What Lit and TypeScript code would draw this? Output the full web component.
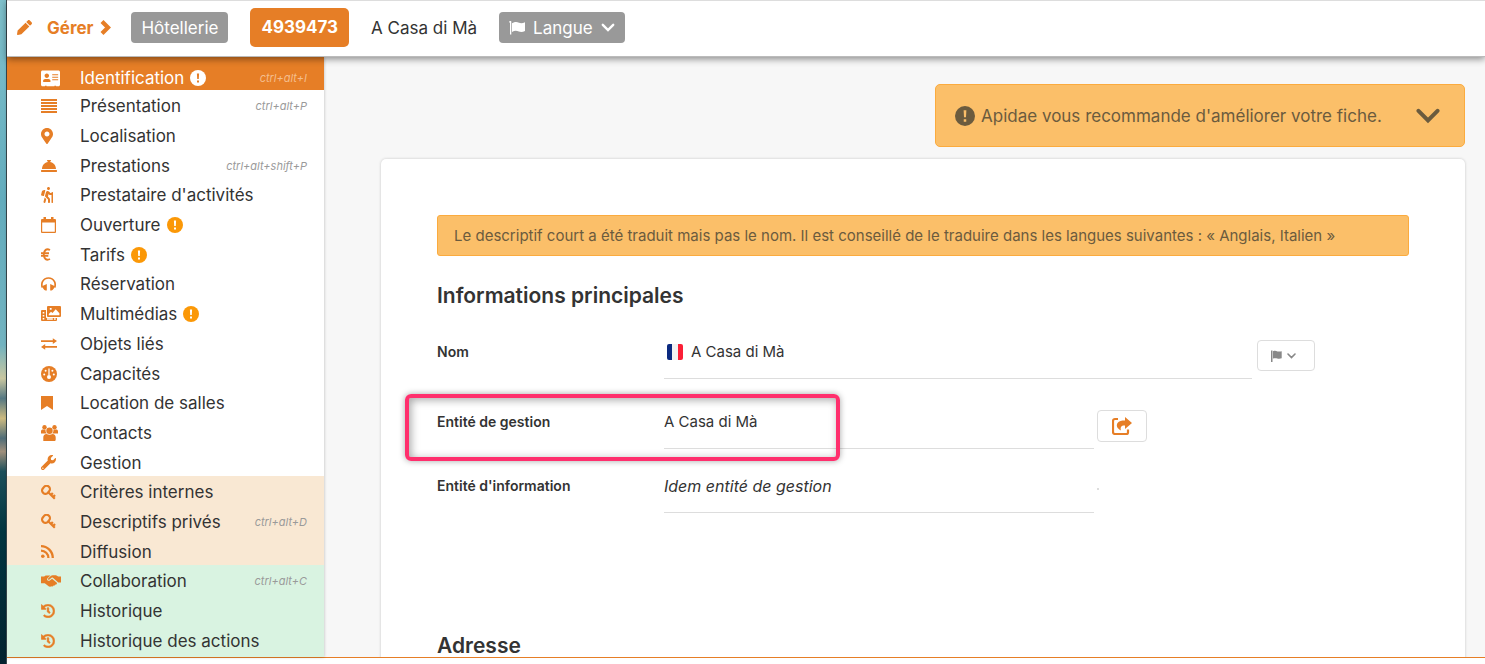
import { LitElement, html, svg, css, nothing, TemplateResult } from "lit";
import { customElement, property } from "lit/decorators.js";
import { classMap } from "lit/directives/class-map.js";

interface Glyph {
  box: string;
  w: number;
  h: number;
  body: TemplateResult;
}

const glyphs: Record<string, Glyph> = {
  pencil: { box: "0 0 512 512", w: 15, h: 15, body: svg`<path fill="currentColor" d="M497.9 142.1l-46.1 46.1c-4.7 4.7-12.3 4.7-17 0l-111-111c-4.7-4.7-4.7-12.3 0-17l46.1-46.1c18.7-18.7 49.1-18.7 67.9 0l60.1 60.1c18.8 18.7 18.8 49.1 0 67.9zM284.2 99.8L21.6 362.4.4 483.9c-2.9 16.4 11.4 30.6 27.8 27.8l121.5-21.3 262.6-262.6c4.7-4.7 4.7-12.3 0-17l-111-111c-4.8-4.7-12.4-4.7-17.1 0z"/>` },
  right: { box: "0 0 11 15", w: 11, h: 15, body: svg`<path d="M2 1.600L8 7.500L2 13.400" fill="none" stroke="currentColor" stroke-width="4.200"/>` },
  down: { box: "0 0 14 9", w: 14, h: 9, body: svg`<path d="M1.800 1.800L7 7L12.200 1.800" fill="none" stroke="currentColor" stroke-width="2.400" stroke-linecap="round"/>` },
  bigDown: { box: "0 0 24 16", w: 24, h: 16, body: svg`<path d="M2.500 2.800L12 12.500L21.500 2.800" fill="none" stroke="currentColor" stroke-width="4" stroke-linecap="round"/>` },
  smallDown: { box: "0 0 9 6", w: 9, h: 6, body: svg`<path d="M1 1L4.500 4.500L8 1" fill="none" stroke="currentColor" stroke-width="1.600" stroke-linecap="round"/>` },
  flag: { box: "0 0 16 14", w: 16, h: 14, body: svg`<path fill="currentColor" d="M.3.8a1 1 0 0 1 2 0v12.600H1V2C.5 1.800.3 1.400.3.800zM3 2.300C6 .6 8 .8 10 1.800c2 .8 4 .3 6-.5v8.700c-2 .9-4 1.400-6.200.5C7.500 9.500 5.500 9.500 3 11z"/>` },
  smallFlag: { box: "0 0 11 12", w: 11, h: 12, body: svg`<path fill="currentColor" d="M0 .5h1.500V12H0zM2 1.200c2-.6 3-.3 4.500.2 1.500.4 2.800.2 4.200-.2v7c-1.500.5-3 .7-4.500.2-1.600-.4-2.700-.3-4.200.2z"/>` },
  card: { box: "0 0 576 512", w: 19, h: 17, body: svg`<path fill="currentColor" fill-rule="evenodd" d="M528 16H48C21.500 16 0 37.500 0 64v380c0 26.500 21.500 48 48 48h72v-14h50v14h236v-14h50v14h72c26.500 0 48-21.500 48-48V64c0-26.500-21.500-48-48-48zm-352 92c38 0 68 30.700 68 68s-30 68-68 68-68-30.700-68-68 30-68 68-68zm112 236.800c0 10.600-10 19.200-22.400 19.200H86.400C74 364 64 355.400 64 344.800v-19.200c0-31.800 30.100-57.600 67.200-57.600h90c37.100 0 66.800 25.800 66.800 57.600zM340 130h180v28H340zm0 75h180v28H340zm0 75h180v28H340z"/>` },
  lines: { box: "0 0 16 14", w: 16, h: 14, body: svg`<path d="M0 1h16M0 4h16M0 7h16M0 10h16M0 13h16" stroke="currentColor" stroke-width="1.800"/>` },
  marker: { box: "0 0 384 512", w: 12, h: 16, body: svg`<path fill="currentColor" d="M172.268 501.670C26.970 291.031 0 269.413 0 192 0 85.961 85.961 0 192 0s192 85.961 192 192c0 77.413-26.970 99.031-172.268 309.670-9.535 13.774-29.930 13.773-39.464 0zM192 272c44.183 0 80-35.817 80-80s-35.817-80-80-80-80 35.817-80 80 35.817 80 80 80z"/>` },
  bell: { box: "0 0 512 512", w: 16, h: 16, body: svg`<path fill="currentColor" d="M288 130.540V112h16c8.840 0 16-7.160 16-16V80c0-8.840-7.160-16-16-16h-96c-8.840 0-16 7.160-16 16v16c0 8.840 7.160 16 16 16h16v18.540C115.490 146.110 32 239.180 32 352h448c0-112.820-83.490-205.890-192-221.460zM496 384H16c-8.840 0-16 7.160-16 16v32c0 8.840 7.160 16 16 16h480c8.840 0 16-7.160 16-16v-32c0-8.840-7.160-16-16-16z"/>` },
  hiking: { box: "0 0 384 512", w: 12, h: 16, body: svg`<path fill="currentColor" d="M80.950 472.230c-4.280 17.160 6.140 34.530 23.280 38.810 2.610.66 5.220.95 7.800.95 14.330 0 27.370-9.700 31.020-24.230l25.240-100.970-52.780-52.780-34.560 138.220zm14.890-196.120L137 117c2.190-8.420-3.140-16.950-11.920-19.060-43.880-10.520-88.350 15.070-99.320 57.170L.49 253.240c-2.190 8.420 3.140 16.950 11.920 19.060l63.560 15.250c8.790 2.100 17.680-3.020 19.870-11.440zM368 160h-16c-8.840 0-16 7.160-16 16v16h-34.750l-46.780-46.780C243.380 134.110 228.610 128 212.910 128c-27.020 0-50.470 18.300-57.030 44.520l-26.920 107.720a32.012 32.012 0 0 0 8.420 30.390L224 397.250V480c0 17.670 14.330 32 32 32s32-14.330 32-32v-82.750c0-17.090-6.660-33.160-18.750-45.250l-46.820-46.820c.15-.5.49-.89.62-1.410l19.890-79.570 22.430 22.430c6 6 14.140 9.380 22.620 9.380h48v240c0 8.840 7.160 16 16 16h16c8.840 0 16-7.160 16-16V176c.01-8.840-7.150-16-15.990-16zM240 96c26.510 0 48-21.490 48-48S266.510 0 240 0s-48 21.490-48 48 21.490 48 48 48z"/>` },
  calendar: { box: "0 0 15 16", w: 15, h: 16, body: svg`<path fill="currentColor" fill-rule="evenodd" d="M0 3a1 1 0 0 1 1-1h1.500V0h2.500V2h5V0h2.500V2H14a1 1 0 0 1 1 1v12a1 1 0 0 1-1 1H1a1 1 0 0 1-1-1zM1.200 5.500V14.800h12.600V5.500z"/>` },
  euro: { box: "0 0 10 13", w: 10, h: 13, body: svg`<path d="M9 2C5.500.2 3 2 2.800 6.500C3 11 5.500 12.800 9 11M0 5.200h8M0 7.900h7.300" fill="none" stroke="currentColor" stroke-width="1.900"/>` },
  headphones: { box: "0 0 15 14", w: 15, h: 14, body: svg`<path d="M1.200 10.500C.6 8 .8 6 1.500 4.700C3 2 5 1 7.500 1s4.500 1 6 3.700c.7 1.300.9 3.300.3 5.800" fill="none" stroke="currentColor" stroke-width="1.700"/><path fill="currentColor" d="M2 8.800L5.800 7v6.500H4.500C3 13 2 11 1 9.500zM13 8.800L9.200 7v6.500h1.300c1.500-.5 2.500-2.500 3.500-4z"/>` },
  media: { box: "0 0 20 16", w: 20, h: 16, body: svg`<path fill="currentColor" fill-rule="evenodd" d="M7 0h12a1 1 0 0 1 1 1v9a1 1 0 0 1-1 1H7a1 1 0 0 1-1-1V1a1 1 0 0 1 1-1zm.8 9.300h10.600V7.200l-3.700-3.900-3.200 3.700-1.500-1.300-2.200 2.300zM8.800 2v1.800h1.800V2z"/><path fill="currentColor" fill-rule="evenodd" d="M1 4h4v7.500l.6.600H16V14a1 1 0 0 1-1 1H1a1 1 0 0 1-1-1V5a1 1 0 0 1 1-1zm.7 2v1.600h1.600V6zm0 3v1.600h1.600V9zm0 3v1.600h1.600V12zm4.300.3v1.500h5.800v-1.500zm7 0v1.500h1.700v-1.500z"/>` },
  exchange: { box: "0 0 16 12", w: 16, h: 12, body: svg`<path fill="currentColor" d="M0 2.200h11.800V.2L16 3.100l-4.200 2.900V4H0zM16 8H4.200V6L0 8.900l4.200 2.900v-2H16z"/>` },
  gauge: { box: "0 0 16 16", w: 16, h: 16, body: svg`<circle cx="8" cy="8" r="8" fill="currentColor"/><g fill="#fff"><circle cx="3.200" cy="8.600" r="1"/><circle cx="12.800" cy="8.600" r="1"/><circle cx="4.600" cy="4.800" r="1"/><circle cx="11.400" cy="4.800" r="1"/><path d="M7.200 2.600h1.600v6.600H7.200z" opacity=".8"/><circle cx="8" cy="10.900" r="2"/></g>` },
  bookmark: { box: "0 0 12 14", w: 12, h: 14, body: svg`<path fill="currentColor" d="M0 0h12v14L6 10 0 14z"/>` },
  users: { box: "0 0 17 16", w: 17, h: 16, body: svg`<g fill="currentColor"><circle cx="3.500" cy="2.200" r="2.200"/><circle cx="13.500" cy="2.200" r="2.200"/><circle cx="8.500" cy="5.800" r="3.200"/><path d="M0 8.500V6.300C0 5 .8 4.500 2 4.500h2.500c0 2 .3 3 1.300 4zM17 8.500V6.300c0-1.300-.8-1.800-2-1.800h-2.500c0 2-.3 3-1.300 4zM2.300 16v-3.500c0-2.300 1.200-3.500 3.200-3.500 2 1 4 1 6 0 2 0 3.200 1.200 3.200 3.500V14.500c0 1-.6 1.500-1.500 1.500z"/></g>` },
  wrench: { box: "0 0 512 512", w: 15, h: 15, body: svg`<path fill="currentColor" d="M507.730 109.100c-2.240-9.030-13.540-12.090-20.120-5.510l-74.360 74.360-67.880-11.310-11.310-67.880 74.360-74.360c6.620-6.620 3.430-17.900-5.660-20.160-47.380-11.740-99.550.91-136.580 37.930-39.640 39.640-50.550 97.100-34.050 147.200L18.740 402.760c-24.990 24.990-24.990 65.510 0 90.500 24.990 24.990 65.510 24.990 90.500 0l213.210-213.210c50.120 16.710 107.470 5.680 147.370-34.220 37.070-37.070 49.700-89.320 37.910-136.730zM64 472c-13.250 0-24-10.750-24-24 0-13.260 10.750-24 24-24s24 10.740 24 24c0 13.250-10.750 24-24 24z"/>` },
  key: { box: "0 0 15 15", w: 15, h: 15, body: svg`<g fill="none" stroke="currentColor" stroke-width="2.200"><rect x="-3.300" y="-4.200" width="6.600" height="8.400" rx="3.200" transform="translate(5 4.800) rotate(40)"/><path d="M7.200 7.200L13.800 13.800M9.800 10.200l2-2.200M12 12.300l2-2.200"/></g>` },
  rss: { box: "0 0 13 13", w: 13, h: 13, body: svg`<circle cx="1.800" cy="11.200" r="1.800" fill="currentColor"/><path d="M0 5.600A7.400 7.400 0 0 1 7.400 13M0 1.200A11.800 11.800 0 0 1 11.800 13" fill="none" stroke="currentColor" stroke-width="2.300"/>` },
  handshake: { box: "0 0 640 384", w: 20, h: 12, body: svg`<path fill="currentColor" d="M0 50h100l50-35 150 0-90 85c-25 25-20 60 5 78 25 15 55 12 78-8l60-52 145 125c18 18 15 38 0 55-12 12-28 12-38 6-5 28-30 42-58 32-15 28-42 36-68 20l-40 18c-30 0-50-10-70-30L120 265H0zM640 50H550L480 8H370c-20 0-35 5-50 18l-92 88c-12 12-8 26 2 34 12 8 28 6 40-4l78-68 22 0 30 28 135 118c6 5 10 12 12 20h113z"/>` },
  history: { box: "0 0 512 512", w: 14, h: 14, body: svg`<path fill="currentColor" stroke="currentColor" stroke-width="18" d="M504 255.531c.253 136.640-111.180 248.372-247.820 248.468-59.015.042-113.223-20.530-155.822-54.911-11.077-8.940-11.905-25.541-1.839-35.607l11.267-11.267c8.609-8.609 22.353-9.551 31.891-1.984C173.062 425.135 212.781 440 256 440c101.705 0 184-82.311 184-184 0-101.705-82.311-184-184-184-48.814 0-93.149 18.969-126.068 49.932l50.754 50.754c10.080 10.080 2.941 27.314-11.313 27.314H24c-8.837 0-16-7.163-16-16V38.627c0-14.254 17.234-21.393 27.314-11.314l49.372 49.372C129.209 34.136 189.552 8 256 8c136.810 0 247.747 110.780 248 247.531zm-180.912 78.784l9.823-12.630c8.138-10.463 6.253-25.542-4.210-33.679L288 256.349V152c0-13.255-10.745-24-24-24h-16c-13.255 0-24 10.745-24 24v135.651l65.409 50.874c10.463 8.137 25.541 6.253 33.679-4.210z"/>` },
  share: { box: "0 0 20 18", w: 20, h: 18, body: svg`<path d="M6 2H3a2 2 0 0 0-2 2v11a2 2 0 0 0 2 2h11.500a1.500 1.500 0 0 0 1.500-1.500V12.500" fill="none" stroke="currentColor" stroke-width="2.200"/><path fill="currentColor" d="M13 0l7 6-7 6V8.500C9.500 8.200 8 10 9 13.500 5 11.500 4 8.500 5.500 6 7 4 9.500 3.500 13 3.500z"/>` },
  alert: { box: "0 0 16 16", w: 16, h: 16, body: svg`<circle cx="8" cy="8" r="8" fill="currentColor"/><path class="mark" d="M6.900 3.400h2.200l-.3 5.600H7.200zM7 10.500h2v2H7z"/>` },
  bigAlert: { box: "0 0 16 16", w: 20, h: 20, body: svg`<circle cx="8" cy="8" r="8" fill="currentColor"/><path class="mark" d="M6.900 3.400h2.200l-.3 5.600H7.200zM7 10.500h2v2H7z"/>` },
};

@customElement("app-icon")
class AppIcon extends LitElement {
  @property() name = "";

  static styles = css`
    :host { display: inline-flex; flex: none; }
    .mark { fill: var(--mark, #fff); }
  `;

  render() {
    const g = glyphs[this.name];
    return html`<svg width=${g.w} height=${g.h} viewBox=${g.box} aria-hidden="true">${g.body}</svg>`;
  }
}

interface Entry {
  icon: string;
  label: string;
  keys?: string;
  warn?: boolean;
  tone?: "active" | "internal" | "shared";
}

const entries: Entry[] = [
  { icon: "card", label: "Identification", keys: "ctrl+alt+I", warn: true, tone: "active" },
  { icon: "lines", label: "Présentation", keys: "ctrl+alt+P" },
  { icon: "marker", label: "Localisation" },
  { icon: "bell", label: "Prestations", keys: "ctrl+alt+shift+P" },
  { icon: "hiking", label: "Prestataire d'activités" },
  { icon: "calendar", label: "Ouverture", warn: true },
  { icon: "euro", label: "Tarifs", warn: true },
  { icon: "headphones", label: "Réservation" },
  { icon: "media", label: "Multimédias", warn: true },
  { icon: "exchange", label: "Objets liés" },
  { icon: "gauge", label: "Capacités" },
  { icon: "bookmark", label: "Location de salles" },
  { icon: "users", label: "Contacts" },
  { icon: "wrench", label: "Gestion" },
  { icon: "key", label: "Critères internes", tone: "internal" },
  { icon: "key", label: "Descriptifs privés", keys: "ctrl+alt+D", tone: "internal" },
  { icon: "rss", label: "Diffusion", tone: "internal" },
  { icon: "handshake", label: "Collaboration", keys: "ctrl+alt+C", tone: "shared" },
  { icon: "history", label: "Historique", tone: "shared" },
  { icon: "history", label: "Historique des actions", tone: "shared" },
];

@customElement("side-menu")
class SideMenu extends LitElement {
  static styles = css`
    :host { display: block; background: #d9f3e1; box-shadow: 0 0 3px rgba(0, 0, 0, 0.25); padding-bottom: 3px; }
    .list { display: flex; flex-direction: column; height: 100%; margin: 0; padding: 0; list-style: none; }
    .item { display: flex; flex: 1 0 29px; background: #fff; }
    .item.active { flex: 0 0 32px; background: #e67e26; --mark: #e67e26; }
    .item.internal { background: #f9e8d3; }
    .item.shared { background: #d9f3e1; }
    .link { display: flex; flex: 1; align-items: center; padding: 3px 17px 0 34px; color: #333; text-decoration: none; font-size: 17px; line-height: 24px; }
    .active .link { padding-top: 9px; color: #fff; }
    .icon { display: flex; flex: 0 0 39px; color: #e67e26; }
    .active .icon, .active .warn { color: #fff; }
    .warn { margin-left: 6px; color: #fb9807; }
    .keys { margin-left: auto; color: #9a9a9a; font-size: 11px; font-style: italic; }
    .active .keys { color: #f4bd8c; }
  `;

  render() {
    return html`<ul class="list">
      ${entries.map((e) => html`<li class=${classMap({ item: true, [e.tone ?? "plain"]: true })}>
        <a class="link" href="#">
          <span class="icon"><app-icon name=${e.icon}></app-icon></span>
          <span>${e.label}</span>
          ${e.warn ? html`<app-icon class="warn" name="alert"></app-icon>` : nothing}
          ${e.keys ? html`<span class="keys">${e.keys}</span>` : nothing}
        </a>
      </li>`)}
    </ul>`;
  }
}

@customElement("app-root")
class AppRoot extends LitElement {
  static styles = css`
    * { box-sizing: border-box; }
    :host { display: flex; height: 100vh; overflow: hidden; color: #333; font-family: Inter, "Open Sans", sans-serif; font-size: 17px;
      background: linear-gradient(#7fc1cc, #63acbd 30%, #72b3c0 52%, #c9c7a0 57%, #557883 60%, #cdbb80 63%, #4f6d78 66%, #a0907c 68%, #1d4f5a 71%, #013540 80%, #03222f); }
    .window { display: flex; flex-direction: column; flex: 1; min-width: 0; margin-left: 6px; border-left: 1px solid #3a4a50; background: #fff; padding-bottom: 6px; }
    .header { display: flex; align-items: center; flex: none; height: 57px; padding: 0 10px 2px; border-top: 1px solid #ddd; border-bottom: 1px solid #bbb; background: #fff; box-shadow: 0 2px 7px rgba(0, 0, 0, 0.45); z-index: 2; }
    .brand { display: flex; align-items: center; margin-right: 20px; color: #e67e26; font-weight: 700; text-decoration: none; }
    .brand-text { margin: 0 7px 0 15px; }
    .tags { display: flex; align-items: center; gap: 22px; }
    .tag { display: flex; align-items: center; height: 31px; padding: 0 10px; border: 0; border-radius: 4px; background: #999; color: #fff; font: inherit; }
    .code { height: 39px; padding: 0 11px; border-radius: 5px; background: #e67e26; color: #fff; font-weight: 700; line-height: 39px; }
    .lang { gap: 8px; }
    .body { display: flex; flex: 1; min-height: 0; border-bottom: 1px solid #e67e26; }
    .menu { flex: 0 0 317px; z-index: 1; }
    .main { display: flex; flex-direction: column; flex: 1; min-width: 0; overflow: hidden; padding: 27px 20px 0 57px; background: #f7f7f7; }
    .advice { display: flex; align-items: center; align-self: flex-end; flex: none; width: 530px; max-width: 100%; height: 63px; padding: 0 24px 0 19px; border: 1px solid #fbab3e; border-radius: 5px; background: #fbbf69; color: #6b5b3e; font: inherit; --mark: #fbbf69; }
    .advice-text { margin: 0 auto 0 6px; }
    .card { flex: 1 0 auto; margin-top: 12px; padding: 56px; border-radius: 5px; background: #fff; box-shadow: 0 0 3px rgba(0, 0, 0, 0.2); }
    .notice { margin: 0; padding: 9px 16px; border: 1px solid #fbab3e; border-radius: 3px; background: #fbbf69; color: #6b5b3e; font-size: 15px; line-height: 21px; }
    .title { margin: 0; padding-top: 27px; font-size: 21px; font-weight: 600; line-height: 26px; }
    .field { position: relative; display: grid; grid-template-columns: 227px minmax(0, 430px) auto; justify-content: start; align-items: center; height: 54px; margin-top: 16px; }
    .wide { grid-template-columns: 227px minmax(0, 588px) auto; }
    .last { margin-top: 10px; }
    .label { font-size: 14px; font-weight: 600; line-height: 20px; }
    .value { display: flex; align-items: center; gap: 8px; height: 54px; border-bottom: 1px solid #ddd; }
    .input { flex: 1; min-width: 0; padding: 0; border: 0; outline: 0; background: none; color: #333; font: inherit; font-size: 15px; }
    .italic { font-size: 16px; font-style: italic; }
    .french { flex: none; width: 16px; height: 16px; margin-left: 3px; border-radius: 2px; background: linear-gradient(90deg, #0b2a80 5px, #f2f2f2 5px, #f2f2f2 11px, #fb1f36 11px); }
    .small { display: flex; align-items: center; justify-content: center; margin-top: 7px; border: 1px solid #ddd; border-radius: 4px; background: #fff; padding: 0; }
    .pick { gap: 5px; width: 58px; height: 31px; margin-left: 5px; padding-right: 6px; color: #888; }
    .open { width: 50px; height: 32px; margin-left: 3px; color: #e67e26; }
    .dot { width: 2px; height: 2px; margin: 5px 0 0 3px; background: #ddd; }
    .marker { position: absolute; left: -32px; top: -1px; width: 435px; height: 67px; border: 4px solid #ff2f6d; border-radius: 6px; box-shadow: 0 0 6px rgba(0, 0, 0, 0.35), inset 2px 2px 8px rgba(0, 0, 0, 0.35); pointer-events: none; }
    .next { padding-top: 120px; }
  `;

  render() {
    return html`<div class="window">
      <header class="header">
        <a class="brand" href="#"><app-icon name="pencil"></app-icon><span class="brand-text">Gérer</span><app-icon name="right"></app-icon></a>
        <div class="tags">
          <span class="tag">Hôtellerie</span>
          <span class="code">4939473</span>
          <span>A Casa di Mà</span>
          <button class="tag lang"><app-icon name="flag"></app-icon>Langue<app-icon name="down"></app-icon></button>
        </div>
      </header>
      <div class="body">
        <side-menu class="menu"></side-menu>
        <main class="main">
          <button class="advice"><app-icon name="bigAlert"></app-icon><span class="advice-text">Apidae vous recommande d'améliorer votre fiche.</span><app-icon name="bigDown"></app-icon></button>
          <section class="card">
            <p class="notice">Le descriptif court a été traduit mais pas le nom. Il est conseillé de le traduire dans les langues suivantes : « Anglais, Italien »</p>
            <h2 class="title">Informations principales</h2>
            <div class="field wide">
              <label class="label" for="nom">Nom</label>
              <div class="value"><span class="french"></span><input class="input" id="nom" .value=${"A Casa di Mà"}></div>
              <button class="small pick" aria-label="Choisir la langue"><app-icon name="smallFlag"></app-icon><app-icon name="smallDown"></app-icon></button>
            </div>
            <div class="field">
              <label class="label" for="gestion">Entité de gestion</label>
              <div class="value"><input class="input" id="gestion" readonly .value=${"A Casa di Mà"}></div>
              <button class="small open" aria-label="Changer l'entité"><app-icon name="share"></app-icon></button>
              <div class="marker"></div>
            </div>
            <div class="field last">
              <label class="label" for="info">Entité d'information</label>
              <div class="value"><input class="input italic" id="info" readonly .value=${"Idem entité de gestion"}></div>
              <span class="dot"></span>
            </div>
            <h2 class="title next">Adresse</h2>
          </section>
        </main>
      </div>
    </div>`;
  }
}
